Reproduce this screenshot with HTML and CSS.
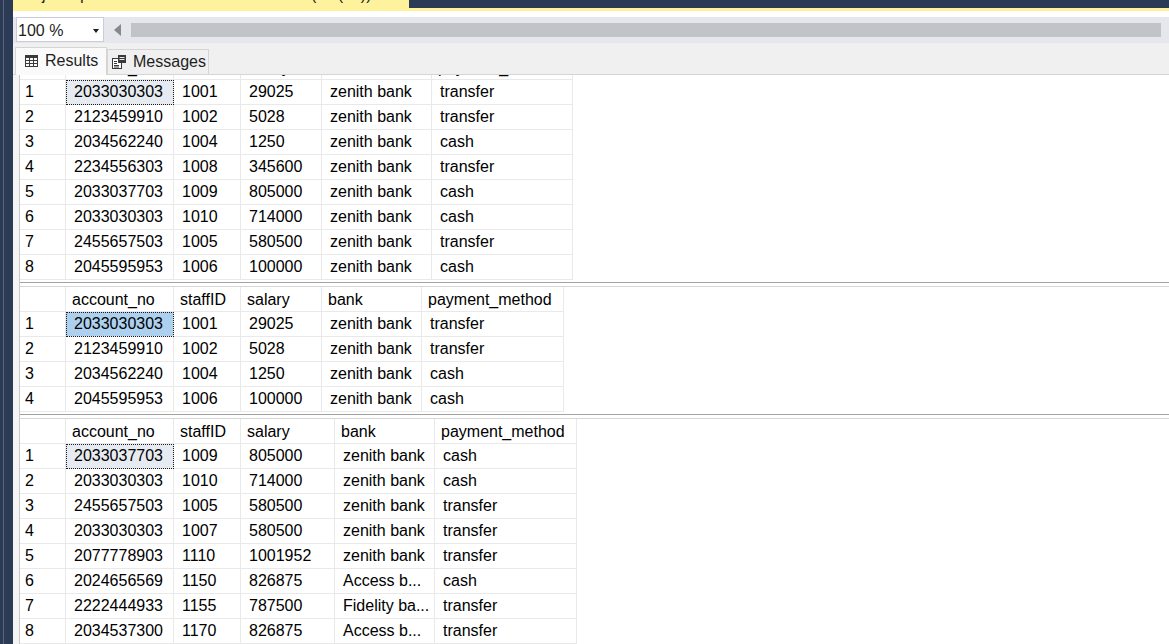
FILE: index.html
```html
<!DOCTYPE html>
<html>
<head>
<meta charset="utf-8">
<link rel="stylesheet" href="styles.css">
</head>
<body>
<div class="app">
  <div class="rail"></div>
  <div class="main">
    <div class="titlebar">
      <div class="doctab"><span class="doctab-text">Projectsql - DESKTOP-V4A4P1U.master (sa (79))</span></div>
      <div class="titlefill"></div>
    </div>
    <div class="accent"></div>
    <div class="editor"></div>
    <div class="toolbar">
      <div class="zoombox"><span class="zoomval">100 %</span><span class="caret"></span></div>
      <div class="arrow-left"></div>
      <div class="track"></div>
    </div>
    <div class="tabs">
      <div class="tab active">
        <svg class="ico" width="13" height="12" viewBox="0 0 13 12"><rect x="0" y="0" width="13" height="3" fill="#3a3a3a"/><rect x="0.5" y="0.5" width="12" height="11" fill="none" stroke="#3a3a3a"/><path d="M0 5.5H13M0 8.5H13M4.5 3V12M8.5 3V12" stroke="#3a3a3a" fill="none"/></svg>
        <span>Results</span>
      </div>
      <div class="tab">
        <svg class="ico" width="14" height="14" viewBox="0 0 14 14"><rect x="0.5" y="3.5" width="9" height="10" fill="#fff" stroke="#3a3a3a"/><path d="M2 6.5H5M2 8.5H5M2 10.5H7M2 12H7" stroke="#3a3a3a" fill="none"/><rect x="6" y="0" width="8" height="8" fill="#3a3a3a"/><rect x="7.5" y="2" width="5" height="1" fill="#e8e8e8"/><rect x="7.5" y="4" width="5" height="1" fill="#e8e8e8"/></svg>
        <span>Messages</span>
      </div>
    </div>
    <div class="results">
      <div class="grid g1">
        <div class="row hdr"><div class="c"></div><div class="c">account_no</div><div class="c">staffID</div><div class="c">salary</div><div class="c">bank</div><div class="c">payment_method</div></div>
        <div class="row"><div class="c n">1</div><div class="c sel">2033030303</div><div class="c">1001</div><div class="c">29025</div><div class="c">zenith bank</div><div class="c">transfer</div></div>
        <div class="row"><div class="c n">2</div><div class="c">2123459910</div><div class="c">1002</div><div class="c">5028</div><div class="c">zenith bank</div><div class="c">transfer</div></div>
        <div class="row"><div class="c n">3</div><div class="c">2034562240</div><div class="c">1004</div><div class="c">1250</div><div class="c">zenith bank</div><div class="c">cash</div></div>
        <div class="row"><div class="c n">4</div><div class="c">2234556303</div><div class="c">1008</div><div class="c">345600</div><div class="c">zenith bank</div><div class="c">transfer</div></div>
        <div class="row"><div class="c n">5</div><div class="c">2033037703</div><div class="c">1009</div><div class="c">805000</div><div class="c">zenith bank</div><div class="c">cash</div></div>
        <div class="row"><div class="c n">6</div><div class="c">2033030303</div><div class="c">1010</div><div class="c">714000</div><div class="c">zenith bank</div><div class="c">cash</div></div>
        <div class="row"><div class="c n">7</div><div class="c">2455657503</div><div class="c">1005</div><div class="c">580500</div><div class="c">zenith bank</div><div class="c">transfer</div></div>
        <div class="row"><div class="c n">8</div><div class="c">2045595953</div><div class="c">1006</div><div class="c">100000</div><div class="c">zenith bank</div><div class="c">cash</div></div>
      </div>
      <div class="split"></div>
      <div class="grid g2 framed">
        <div class="row hdr"><div class="c"></div><div class="c">account_no</div><div class="c">staffID</div><div class="c">salary</div><div class="c">bank</div><div class="c">payment_method</div></div>
        <div class="row"><div class="c n">1</div><div class="c sel hi">2033030303</div><div class="c">1001</div><div class="c">29025</div><div class="c">zenith bank</div><div class="c">transfer</div></div>
        <div class="row"><div class="c n">2</div><div class="c">2123459910</div><div class="c">1002</div><div class="c">5028</div><div class="c">zenith bank</div><div class="c">transfer</div></div>
        <div class="row"><div class="c n">3</div><div class="c">2034562240</div><div class="c">1004</div><div class="c">1250</div><div class="c">zenith bank</div><div class="c">cash</div></div>
        <div class="row"><div class="c n">4</div><div class="c">2045595953</div><div class="c">1006</div><div class="c">100000</div><div class="c">zenith bank</div><div class="c">cash</div></div>
      </div>
      <div class="split"></div>
      <div class="grid g3 framed">
        <div class="row hdr"><div class="c"></div><div class="c">account_no</div><div class="c">staffID</div><div class="c">salary</div><div class="c">bank</div><div class="c">payment_method</div></div>
        <div class="row"><div class="c n">1</div><div class="c sel">2033037703</div><div class="c">1009</div><div class="c">805000</div><div class="c">zenith bank</div><div class="c">cash</div></div>
        <div class="row"><div class="c n">2</div><div class="c">2033030303</div><div class="c">1010</div><div class="c">714000</div><div class="c">zenith bank</div><div class="c">cash</div></div>
        <div class="row"><div class="c n">3</div><div class="c">2455657503</div><div class="c">1005</div><div class="c">580500</div><div class="c">zenith bank</div><div class="c">transfer</div></div>
        <div class="row"><div class="c n">4</div><div class="c">2033030303</div><div class="c">1007</div><div class="c">580500</div><div class="c">zenith bank</div><div class="c">transfer</div></div>
        <div class="row"><div class="c n">5</div><div class="c">2077778903</div><div class="c">1110</div><div class="c">1001952</div><div class="c">zenith bank</div><div class="c">transfer</div></div>
        <div class="row"><div class="c n">6</div><div class="c">2024656569</div><div class="c">1150</div><div class="c">826875</div><div class="c">Access b...</div><div class="c">cash</div></div>
        <div class="row"><div class="c n">7</div><div class="c">2222444933</div><div class="c">1155</div><div class="c">787500</div><div class="c">Fidelity ba...</div><div class="c">transfer</div></div>
        <div class="row"><div class="c n">8</div><div class="c">2034537300</div><div class="c">1170</div><div class="c">826875</div><div class="c">Access b...</div><div class="c">transfer</div></div>
      </div>
    </div>
  </div>
</div>
</body>
</html>
```

FILE: styles.css
```css
html, body {
  margin: 0;
  padding: 0;
}
body {
  width: 1169px;
  height: 644px;
  overflow: hidden;
  font-family: "Liberation Sans", Arial, sans-serif;
  font-size: 16px;
  color: #000;
  background: #fff;
}
.app {
  display: flex;
  height: 644px;
}
.rail {
  width: 13px;
  flex: none;
  background: linear-gradient(to right, #2b3a55 0 3px, #59647d 3px 4px, #2b3a55 4px 13px);
}
.main {
  flex: 1;
  min-width: 0;
  display: flex;
  flex-direction: column;
}
.titlebar {
  display: flex;
  height: 8px;
  flex: none;
  background: #2b3a55;
}
.doctab {
  width: 396px;
  flex: none;
  background: #fff29d;
  overflow: hidden;
  padding-left: 4px;
  box-sizing: border-box;
}
.doctab-text {
  display: block;
  line-height: 16px;
  margin-top: -13px;
  color: #1e1e1e;
  white-space: nowrap;
}
.titlefill {
  flex: 1;
}
.accent {
  height: 3px;
  flex: none;
  background: #fff29d;
}
.editor {
  height: 6px;
  flex: none;
  background: #fff;
}
.toolbar {
  height: 26px;
  flex: none;
  background: #e6e7ed;
  display: flex;
  align-items: center;
  padding-left: 3px;
}
.zoombox {
  align-self: flex-start;
  width: 88px;
  height: 25px;
  box-sizing: border-box;
  border: 1px solid #c9ccd9;
  background: #fff;
  display: flex;
  align-items: center;
  justify-content: space-between;
  padding: 2px 4px 0 1px;
  line-height: 21px;
  color: #1e1e1e;
}
.caret {
  width: 0;
  height: 0;
  margin-top: 1px;
  border-left: 3.5px solid transparent;
  border-right: 3.5px solid transparent;
  border-top: 4px solid #1e1e1e;
}
.arrow-left {
  margin-left: 10px;
  width: 0;
  height: 0;
  border-right: 7px solid #87888c;
  border-top: 6px solid transparent;
  border-bottom: 6px solid transparent;
}
.track {
  flex: 1;
  height: 14px;
  margin-left: 10px;
  margin-right: 8px;
  background: #c2c3c9;
}
.tabs {
  height: 32px;
  flex: none;
  box-sizing: border-box;
  border-bottom: 1px solid #d5d5d5;
  background: #f0f0f0;
  display: flex;
  align-items: flex-end;
  padding-left: 2px;
}
.tab {
  display: flex;
  align-items: center;
  gap: 7px;
  box-sizing: border-box;
  border: 1px solid #d5d5d5;
  border-bottom: none;
  height: 25px;
  width: 102px;
  padding-left: 4px;
  color: #1e1e1e;
  white-space: nowrap;
}
.tab.active {
  width: 92px;
  height: 28px;
  margin-bottom: -1px;
  background: #fafafa;
  padding-left: 9px;
  padding-bottom: 2px;
}
.ico {
  flex: none;
}
.results {
  flex: 1;
  min-height: 0;
  display: flex;
  flex-direction: column;
  padding-left: 6px;
  background: #f4f4f4;
}
.grid {
  background: #fff;
  border-left: 1px solid #c8c8c8;
  flex: none;
}
.grid.framed {
  border-top: 1px solid #d6d6d6;
}
.g1 {
  height: 205px;
  overflow: hidden;
}
.g1 .hdr {
  margin-top: -20px;
}
.g3 {
  flex: 1;
  overflow: hidden;
}
.split {
  flex: none;
  background: #fff;
  border-left: 1px solid #c8c8c8;
  padding: 2px 0 3px;
}
.split::before {
  content: "";
  display: block;
  height: 1px;
  background: #a3a3a3;
}
.row {
  display: grid;
  width: max-content;
}
.g1 .row {
  grid-template-columns: 46px 108px 67px 81px 110px 141px;
}
.g2 .row {
  grid-template-columns: 46px 108px 67px 81px 100px 142px;
}
.g3 .row {
  grid-template-columns: 46px 108px 67px 94px 100px 142px;
}
.c {
  box-sizing: border-box;
  height: 25px;
  border-right: 1px solid #e9e9e9;
  border-bottom: 1px solid #e9e9e9;
  padding-left: 8px;
  line-height: 24px;
  white-space: nowrap;
  overflow: hidden;
}
.c.n {
  padding-left: 5px;
}
.hdr .c {
  padding: 2px 0 0 6px;
  line-height: 22px;
}
.sel {
  background: #e6ebf1;
  outline: 1px dotted #1a1a1a;
  outline-offset: -1px;
}
.sel.hi {
  background: #aed0ef;
}
```
